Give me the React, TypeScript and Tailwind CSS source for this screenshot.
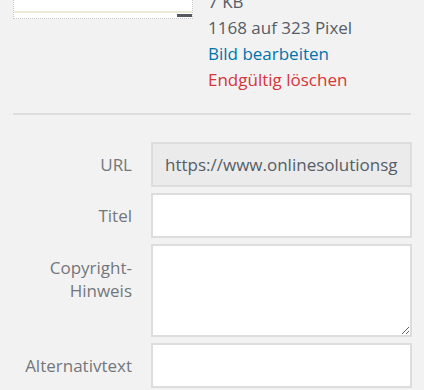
import React from "react";

const FormRow: React.FC<{ label: React.ReactNode; top?: boolean; children: React.ReactNode }> = ({
  label,
  top,
  children,
}) => (
  <div className={`flex pl-[13px] ${top ? "items-start" : "items-center"}`}>
    <label
      className={`w-[119px] shrink-0 text-right text-[#72777c] leading-[23px] ${top ? "pt-[12px]" : ""}`}
    >
      {label}
    </label>
    <div className="ml-[19px] w-[261px]">{children}</div>
  </div>
);

const App: React.FC = () => {
  return (
    <div
      className="w-[424px] h-[390px] overflow-hidden bg-[#f2f2f2] text-[17px]"
      style={{ fontFamily: '"Open Sans", "Noto Sans", sans-serif' }}
    >
      {/* attachment info */}
      <div className="flex items-start pl-[13px] -mt-[11px]">
        <div className="w-[180px] h-[30px] flex flex-col border border-dotted border-[#c4c4c4] bg-white">
          <div className="flex-1" />
          <div className="h-[2px] bg-[#ece9d8]" />
          <div className="h-[5px] flex justify-end items-center">
            <div className="w-[15px] h-[3px] bg-[#555a5e]" />
          </div>
        </div>
        <div className="ml-[15px] leading-[26px] text-[#555d66]">
          <div>7 KB</div>
          <div>1168 auf 323 Pixel</div>
          <div className="text-[#0073aa]">Bild bearbeiten</div>
          <div className="text-[#d63638]">Endgültig löschen</div>
        </div>
      </div>

      <div className="mx-[13px] mt-[20px] h-[2px] bg-[#dddddd]" />

      {/* settings */}
      <div className="mt-[27px] flex flex-col gap-[6px]">
        <FormRow label="URL">
          <input
            readOnly
            value="https://www.onlinesolutionsgroup.de/wp-content/uploads/bild.jpg"
            className="w-full h-[45px] border-2 border-[#dddddd] bg-[#ebebeb] px-[12px] text-[#555d66] outline-none"
          />
        </FormRow>
        <FormRow label="Titel">
          <input className="w-full h-[45px] border-2 border-[#dddddd] bg-white px-[12px] outline-none" />
        </FormRow>
        <FormRow
          top
          label={
            <>
              Copyright-
              <br />
              Hinweis
            </>
          }
        >
          <textarea className="block w-full h-[93px] border-2 border-[#dddddd] bg-white px-[12px] outline-none" />
        </FormRow>
        <FormRow label="Alternativtext">
          <input className="w-full h-[45px] border-2 border-[#dddddd] bg-white px-[12px] outline-none" />
        </FormRow>
      </div>
    </div>
  );
};

export default App;
